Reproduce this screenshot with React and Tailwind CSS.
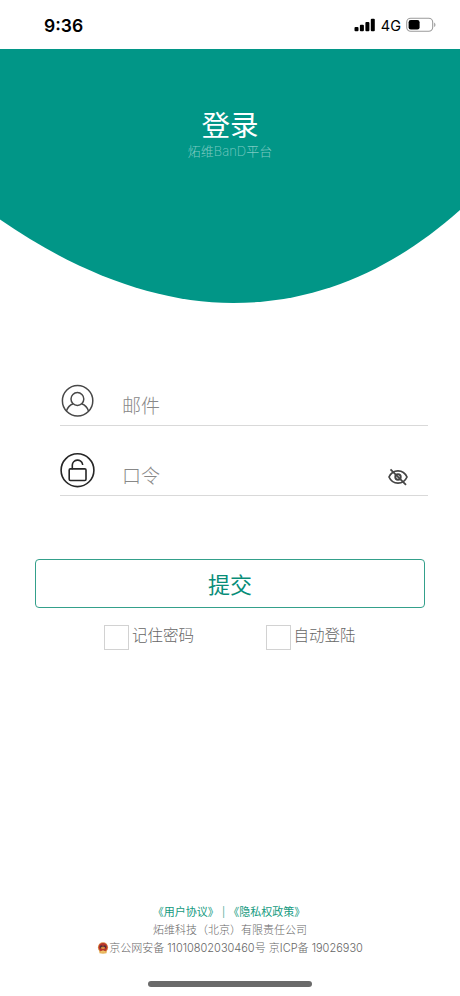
import { useState } from 'react';

function StatusBar() {
  return (
    <div className="flex h-[49px] items-start justify-between pl-11 pr-[23px]">
      <span className="mt-[14px] font-['Inter'] text-[17.5px] leading-6 font-semibold text-black">9:36</span>
      <div className="mt-[14px] flex h-6 items-center">
        <svg width="22" height="14" viewBox="0 0 22 14" className="-mt-[2px]" fill="#000">
          <rect x="0.5" y="9" width="4" height="4.3" rx="1" />
          <rect x="5.9" y="6.7" width="4" height="6.6" rx="1" />
          <rect x="11.4" y="4" width="4" height="9.3" rx="1" />
          <rect x="16.8" y="0.8" width="4" height="12.5" rx="1" />
        </svg>
        <span className="ml-[5px] font-['Inter'] text-[14.5px] leading-6 text-black">4G</span>
        <svg width="31" height="16" viewBox="0 0 31 16" className="ml-[5px] -mt-[2px]">
          <rect x="0.7" y="1.2" width="26" height="13" rx="4" fill="none" stroke="#9b9b9b" strokeWidth="1.1" />
          <rect x="2.6" y="3" width="11" height="9.4" rx="2.2" fill="#000" />
          <path d="M28.2 5.5c1.7.8 1.7 3.8 0 4.6z" fill="#9b9b9b" />
        </svg>
      </div>
    </div>
  );
}

function Header() {
  return (
    <header className="relative h-[255px] text-center">
      <svg width="460" height="255" viewBox="0 0 460 255" className="absolute inset-0">
        <path d="M0 0H460V161C395 219 320 254 233 254C160 254 80 226 0 170.5Z" fill="#019687" />
      </svg>
      <div className="relative pt-[59px]">
        <h1 className="text-[28.5px] leading-9 text-white">登录</h1>
        <p className="-mt-[2px] text-[13px] leading-[18px] font-light text-[#7fcac2]">
          炻维<span className="font-['Inter'] text-[13px] font-extralight">BanD</span>平台
        </p>
      </div>
    </header>
  );
}

function UserIcon() {
  return (
    <svg width="36" height="36" viewBox="0 0 36 36" fill="none" stroke="#484848" strokeWidth="1.5">
      <circle cx="18.6" cy="18.8" r="15.2" />
      <circle cx="18.4" cy="17" r="6.4" />
      <path d="M7.3 29.3c1.2-3.9 3.7-6.3 6.9-7.5M22.6 21.8c3.3 1.2 5.8 3.6 7 7.5" />
    </svg>
  );
}

function LockIcon() {
  return (
    <svg width="36" height="36" viewBox="0 0 36 36" fill="none" stroke="#262626" strokeWidth="1.6">
      <circle cx="18.5" cy="18.2" r="16.4" />
      <rect x="10.2" y="16.9" width="16.8" height="11.6" rx="1.2" />
      <path d="M13.3 16.7v-3.6a5.2 5.2 0 0 1 10.3-.8" strokeLinecap="round" />
    </svg>
  );
}

function EyeOffIcon() {
  return (
    <svg width="22" height="20" viewBox="0 0 22 20" fill="none" stroke="#454545" strokeWidth="1.7">
      <path d="M2 10C3.7 6.2 7 3.8 11 3.8S18.3 6.2 20 10C18.3 13.8 15 16.2 11 16.2S3.7 13.8 2 10Z" />
      <circle cx="11" cy="10" r="2.7" strokeWidth="2" />
      <path d="M3.5 2.3 19 17.9" />
    </svg>
  );
}

function Field({ icon, type, placeholder, action }) {
  return (
    <div className="flex h-[70px] items-end border-b border-[#d9d9d9] pb-[6px]">
      <span className="mb-[1px] -ml-[1px] shrink-0">{icon}</span>
      <input
        type={type}
        placeholder={placeholder}
        className="-mb-[2px] ml-[27px] h-7 min-w-0 flex-1 bg-transparent text-[19px] font-light text-[#555] outline-none placeholder:text-[#888]"
      />
      {action}
    </div>
  );
}

function Check({ label }) {
  return (
    <label className="flex items-start gap-[3px]">
      <input type="checkbox" className="mt-[5px] h-[25px] w-[25px] appearance-none border border-[#d2d2d2] bg-white checked:bg-[#019687]" />
      <span className="mt-px text-[15.5px] leading-[30px] font-light text-[#666]">{label}</span>
    </label>
  );
}

function Badge() {
  return (
    <svg width="12" height="12" viewBox="0 0 11 12">
      <path d="M1.5 7.5 2 11.2 5.5 11.7 9 11.2 9.5 7.5Z" fill="#e5b45a" />
      <circle cx="5.5" cy="5.4" r="5.1" fill="#d98b45" />
      <circle cx="5.5" cy="5.3" r="4.3" fill="#b9342b" />
      <path d="M2.2 4 4 3.3 5.5 4 7 3.3 8.8 4 8.2 6.2H2.8Z" fill="#532d37" />
      <path d="M3.5 5.2 5.5 4.4 7.5 5.2 7 7H4Z" fill="#d98b3e" />
      <path d="M3 9.2 5.5 8.2 8 9.2 7.5 10.6H3.5Z" fill="#efc36a" />
    </svg>
  );
}

export default function App() {
  const [visible, setVisible] = useState(false);

  return (
    <div className="flex h-[996px] w-[460px] flex-col bg-white font-['Inter','Noto_Sans_CJK_SC',sans-serif]">
      <StatusBar />
      <Header />

      <form className="flex flex-col" onSubmit={(e) => e.preventDefault()}>
        <div className="ml-[60px] mr-8 mt-[52px]">
          <Field icon={<UserIcon />} type="text" placeholder="邮件" />
          <Field
            icon={<LockIcon />}
            type={visible ? 'text' : 'password'}
            placeholder="口令"
            action={
              <button type="button" className="mr-[19px] mb-[2px]" onClick={() => setVisible(!visible)}>
                <EyeOffIcon />
              </button>
            }
          />
        </div>

        <button type="submit" className="ml-[35px] mr-[35px] mt-[63px] h-[49px] rounded-[4px] border border-[#34a08b] pt-[2px] text-[22px] leading-none text-[#078d78]">
          提交
        </button>

        <div className="ml-[104px] mt-3 flex gap-[71.5px]">
          <Check label="记住密码" />
          <Check label="自动登陆" />
        </div>
      </form>

      <footer className="mt-auto flex flex-col items-center text-[11px] leading-[18px] text-[#777]">
        <p className="mr-[2px] text-[#149a80]">
          <a>《用户协议》</a> <span className="text-[10px] font-light">|</span> <a>《隐私权政策》</a>
        </p>
        <p className="font-light text-[#666]">炻维科技（北京）有限责任公司</p>
        <p className="flex items-center font-light text-[#666]">
          <Badge />
          京公网安备 11010802030460号 京ICP备 19026930
        </p>
        <div className="mt-6 mb-[9px] h-[6px] w-[164px] rounded-full bg-[#6a6a6a]" />
      </footer>
    </div>
  );
}
